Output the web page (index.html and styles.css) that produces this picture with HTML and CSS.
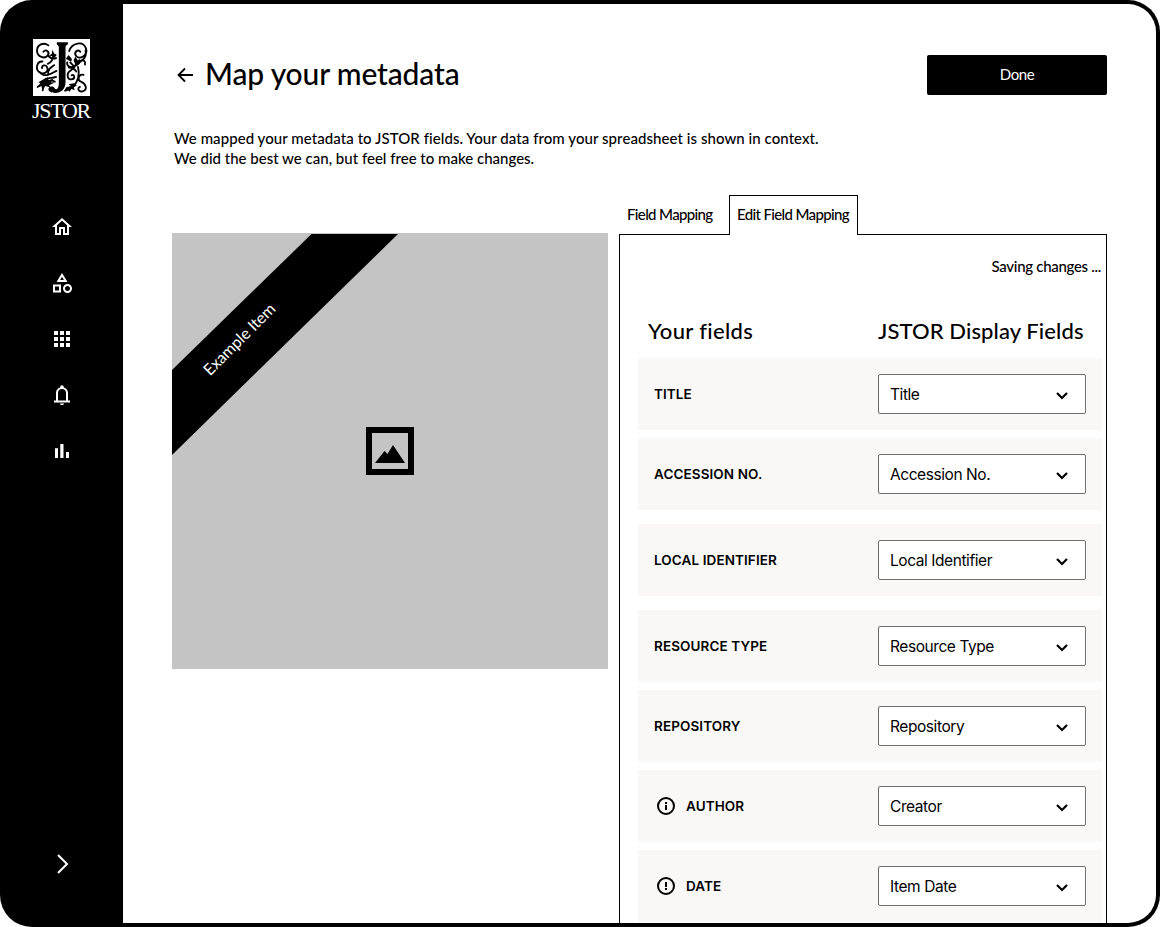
FILE: index.html
```html
<!DOCTYPE html>
<html lang="en">
<head>
<meta charset="utf-8">
<title>Map your metadata</title>
<link rel="stylesheet" href="styles.css">
</head>
<body>
<div class="frame">
  <nav class="sidebar">
    <div class="brand">
      <svg class="brand-mark" viewBox="0 0 170 170">
        <path fill="#fff" d="M0 0h170v170H0z"/>
        <path d="M71 10h33v6l-7 5v108c0 20-13 32-31 32-12 0-20-5-20-11 0-9 13-11 18-4 4 8 13 4 13-14V22l-6-6z"/>
        <g fill="none" stroke="#000" stroke-width="5.500" stroke-linecap="round">
          <path d="M46 19C31 8 12 17 12 35s24 27 33 13c5-10-7-19-14-10M44 48c8 10 15 13 25 9M61 46c-1 18-8 25-17 28"/>
          <path d="M28 67C10 66 7 91 19 99c14 9 29-2 23-15-4-9-17-6-15 3M20 99c16 19 36 3 50-4M45 106c-2-15 8-21 18-28"/>
          <path d="M14 143c13-4 17-16 27-24M38 119c10-4 22-2 31-6M29 153c1-15 10-23 21-28M65 127c-10-5-22-2-31 7"/>
          <path d="M108 36c8-26 42-31 50-8 7 21-20 36-30 22-7-10 6-22 13-12M157 34c5 28-18 32-29 44-10 10-28 7-26-8"/>
          <path d="M131 72c-8 13-12 18-20 23-13 9-8 29 6 25 10-3 6-16-2-12M111 70l13 13M107 85c10 0 18 5 22 12"/>
          <path d="M134 83c7 23-1 46-14 58-7 7-15 9-24 13M139 66c12-6 18 0 16 10M151 107c-15-4-20 16-8 20 14 5 22 24 5 29-11 3-18-9-8-13"/>
        </g>
        <path d="M33 119l12-5 1 9 16-5-9 11 12 1-17 8 5 7-17-5-8 12-3-12-14 4 11-12-6-3zM106 48l10 12-2 8-16-9zM121 64l5-12 8 12 5-6 1 16-11 8zM121 132l-15 3 7 5-14 4-6 12 12-4 3 6 7-9 9 4-2-9 9-6zM58 32l5 11 8 4-7 10-8-6-8-1 8-6z"/>
      </svg>
      <span class="brand-name">JSTOR</span>
    </div>
    <div class="nav-icons">
      <svg viewBox="0 0 24 24" fill="#fff"><path d="M12 5.690l5 4.500V18h-2v-6H9v6H7v-7.810l5-4.500M12 3L2 12h3v8h6v-6h2v6h6v-8h3L12 3z"/></svg>
      <svg viewBox="0 0 24 24" fill="#fff"><path d="M12 2l-5.500 9h11L12 2zm0 3.840L13.930 9h-3.870L12 5.840zM17.500 13c-2.490 0-4.500 2.010-4.500 4.500s2.010 4.500 4.500 4.500 4.500-2.010 4.500-4.500-2.010-4.500-4.500-4.500zm0 7c-1.380 0-2.500-1.120-2.500-2.500s1.120-2.500 2.500-2.500 2.500 1.120 2.500 2.500-1.120 2.500-2.500 2.500zM3 21.500h8v-8H3v8zm2-6h4v4H5v-4z"/></svg>
      <svg viewBox="0 0 24 24" fill="#fff"><path d="M4 8h4V4H4v4zm6 12h4v-4h-4v4zm-6 0h4v-4H4v4zm0-6h4v-4H4v4zm6 0h4v-4h-4v4zm6-10v4h4V4h-4zm-6 4h4V4h-4v4zm6 6h4v-4h-4v4zm0 6h4v-4h-4v4z"/></svg>
      <svg viewBox="0 0 24 24" fill="#fff"><path d="M10 20.500h4c0 1-.9 1.500-2 1.500s-2-.5-2-1.500zM18 17.500V10c0-3-1.600-4.800-4.200-5.600V4a1.800 1.800 0 0 0-3.600 0v.4C7.600 5.200 6 7 6 10v7.500H4v2h16v-2zm-2 0H8V10c0-2.500 1.500-4 4-4s4 1.500 4 4z"/></svg>
      <svg viewBox="0 0 24 24" fill="#fff"><path d="M5 9.200h3V19H5zM10.300 5h3.200v14h-3.200zM16 13h3v6h-3z"/></svg>
    </div>
    <svg class="expand" viewBox="0 0 24 24" fill="none" stroke="#fff" stroke-width="2"><path d="M8 3l9 9-9 9"/></svg>
  </nav>
  <main class="content">
    <header class="header">
      <svg class="back" viewBox="0 0 16 16" fill="none" stroke="#000" stroke-width="1.800"><path d="M16 8H2M8 1.500L1.500 8 8 14.500"/></svg>
      <h1 class="heading">Map your metadata</h1>
      <button class="done">Done</button>
    </header>
    <p class="intro"><span class="intro-first">We mapped your metadata to JSTOR fields. Your data from your spreadsheet is shown in context.</span><br><span>We did the best we can, but feel free to make changes.</span></p>
    <div class="columns">
      <div class="preview">
        <svg class="ribbon" viewBox="0 0 227 221"><path d="M139.500 0H226L0 221v-85z"/></svg>
        <span class="ribbon-label">Example Item</span>
        <svg class="image-icon" viewBox="0 0 48 48"><path fill-rule="evenodd" d="M0 0h48v48H0zM6 6v36h36V6z"/><path d="M9 36l9.500-12 3 3L27 18l12 18z"/></svg>
      </div>
      <section class="mapping">
        <div class="tabs"><span class="tab">Field Mapping</span><span class="tab tab-active">Edit Field Mapping</span></div>
        <div class="panel">
          <p class="status">Saving changes ...</p>
          <div class="titles"><h2 class="title-yours">Your fields</h2><h2 class="title-display">JSTOR Display Fields</h2></div>
          <div class="rows">
            <div class="row"><span class="label">TITLE</span><div class="select"><span>Title</span><svg class="chevron" viewBox="0 0 12 8"><path d="M1 1l5 5 5-5"/></svg></div></div>
            <div class="row row-spaced"><span class="label">ACCESSION NO.</span><div class="select"><span>Accession No.</span><svg class="chevron" viewBox="0 0 12 8"><path d="M1 1l5 5 5-5"/></svg></div></div>
            <div class="row row-spaced"><span class="label">LOCAL IDENTIFIER</span><div class="select"><span>Local Identifier</span><svg class="chevron" viewBox="0 0 12 8"><path d="M1 1l5 5 5-5"/></svg></div></div>
            <div class="row"><span class="label">RESOURCE TYPE</span><div class="select"><span>Resource Type</span><svg class="chevron" viewBox="0 0 12 8"><path d="M1 1l5 5 5-5"/></svg></div></div>
            <div class="row"><span class="label">REPOSITORY</span><div class="select"><span>Repository</span><svg class="chevron" viewBox="0 0 12 8"><path d="M1 1l5 5 5-5"/></svg></div></div>
            <div class="row"><svg class="note" viewBox="0 0 20 20"><circle cx="10" cy="10" r="8"/><path d="M10 9v5M10 6v2"/></svg><span class="label">AUTHOR</span><div class="select"><span>Creator</span><svg class="chevron" viewBox="0 0 12 8"><path d="M1 1l5 5 5-5"/></svg></div></div>
            <div class="row"><svg class="note" viewBox="0 0 20 20"><circle cx="10" cy="10" r="8"/><path d="M10 6v5M10 12v2"/></svg><span class="label">DATE</span><div class="select"><span>Item Date</span><svg class="chevron" viewBox="0 0 12 8"><path d="M1 1l5 5 5-5"/></svg></div></div>
          </div>
        </div>
      </section>
    </div>
  </main>
</div>
</body>
</html>
```

FILE: styles.css
```css
* { box-sizing: border-box; }
body { margin: 0; background: #fff; color: #000; font-family: Lato, "Open Sans", sans-serif; font-weight: 500; }
h1, h2, p { margin: 0; }
svg { display: block; flex: none; }
.frame { width: 1160px; height: 927px; padding: 4px; border-radius: 32px; overflow: hidden; display: flex; background: #000; }
.sidebar { width: 119px; flex: none; display: flex; flex-direction: column; align-items: center; padding: 35px 3px 47px 0; }
.brand { display: flex; flex-direction: column; align-items: center; margin-right: 2px; }
.brand-mark { width: 57px; height: 57px; }
.brand-name { height: 31px; line-height: 30px; color: #fff; font-family: "Liberation Serif", serif; font-weight: 400; font-size: 22px; letter-spacing: -1.300px; }
.nav-icons { display: flex; flex-direction: column; gap: 32px; margin-top: 88px; }
.nav-icons svg { width: 24px; height: 24px; }
.expand { width: 24px; height: 24px; margin-top: auto; }
.content { flex: 1; min-width: 0; padding: 51px 49px 0; display: flex; flex-direction: column; background: #fff; border-radius: 0 28px 28px 0; overflow: hidden; }
.header { height: 40px; flex: none; display: flex; align-items: center; padding-left: 5px; }
.back { width: 16px; height: 16px; }
.heading { margin-left: 12px; padding-bottom: 4px; font-size: 30px; line-height: 40px; font-weight: 500; letter-spacing: -0.150px; white-space: nowrap; }
.done { margin-left: auto; width: 180px; height: 40px; padding: 0 0 2px; border: 0; border-radius: 2px; background: #000; color: #fff; font: 400 15px/38px Lato, sans-serif; letter-spacing: -0.400px; }
.intro { margin: 33px 0 0 2px; font-size: 15px; line-height: 20px; white-space: nowrap; }
.intro-first { letter-spacing: 0.060px; }
.columns { display: flex; gap: 11px; margin-top: 27px; }
.preview { position: relative; width: 436px; height: 436px; flex: none; margin-top: 38px; background: #c4c4c4; display: flex; align-items: center; justify-content: center; }
.ribbon { position: absolute; left: 0; top: 1px; width: 227px; height: 221px; }
.ribbon-label { position: absolute; left: 17px; top: 96px; width: 100px; text-align: center; color: #fff; font-size: 16px; font-weight: 400; line-height: 20px; letter-spacing: -0.100px; transform: rotate(-45deg); white-space: nowrap; }
.image-icon { width: 48px; height: 48px; }
.mapping { width: 488px; flex: none; display: flex; flex-direction: column; }
.tabs { display: flex; height: 40px; font-size: 15px; line-height: 36px; letter-spacing: -0.640px; white-space: nowrap; }
.tab { width: 110px; padding-left: 8px; border-top: 1px solid transparent; }
.tab-active { position: relative; width: 129px; padding-left: 7px; border: 1px solid #000; border-bottom: 0; background: #fff; }
.panel { margin-top: -1px; border: 1px solid #000; border-bottom: 0; padding: 20px 5px 0 18px; height: 689px; }
.status { text-align: right; font-size: 15px; line-height: 22px; letter-spacing: -0.300px; }
.titles { display: flex; margin-top: 38px; height: 43px; line-height: 32px; white-space: nowrap; }
.titles h2 { font-size: 22px; font-weight: 500; }
.title-yours { width: 240px; flex: none; padding-left: 10px; letter-spacing: 0.350px; }
.title-display { letter-spacing: 0.100px; }
.rows { display: flex; flex-direction: column; gap: 8px; width: 464px; }
.row { height: 72px; flex: none; background: #f9f8f6; display: flex; align-items: center; padding: 0 16px; }
.row-spaced { margin-bottom: 6px; }
.label { font-family: Inter, sans-serif; font-weight: 600; font-size: 13.500px; line-height: 20px; letter-spacing: 0.100px; white-space: nowrap; }
.note { width: 20px; height: 20px; margin: 0 10px 0 2px; fill: none; stroke: #000; stroke-width: 2; }
.select { margin-left: auto; width: 208px; height: 40px; border: 1px solid #6f6f6f; border-radius: 2px; background: #fff; display: flex; align-items: center; justify-content: space-between; padding: 2px 17px 0 11px; font: 400 15.500px/20px Inter, sans-serif; letter-spacing: -0.430px; white-space: nowrap; }
.chevron { width: 12px; height: 8px; margin-top: 1px; fill: none; stroke: #000; stroke-width: 2.200; }
```
